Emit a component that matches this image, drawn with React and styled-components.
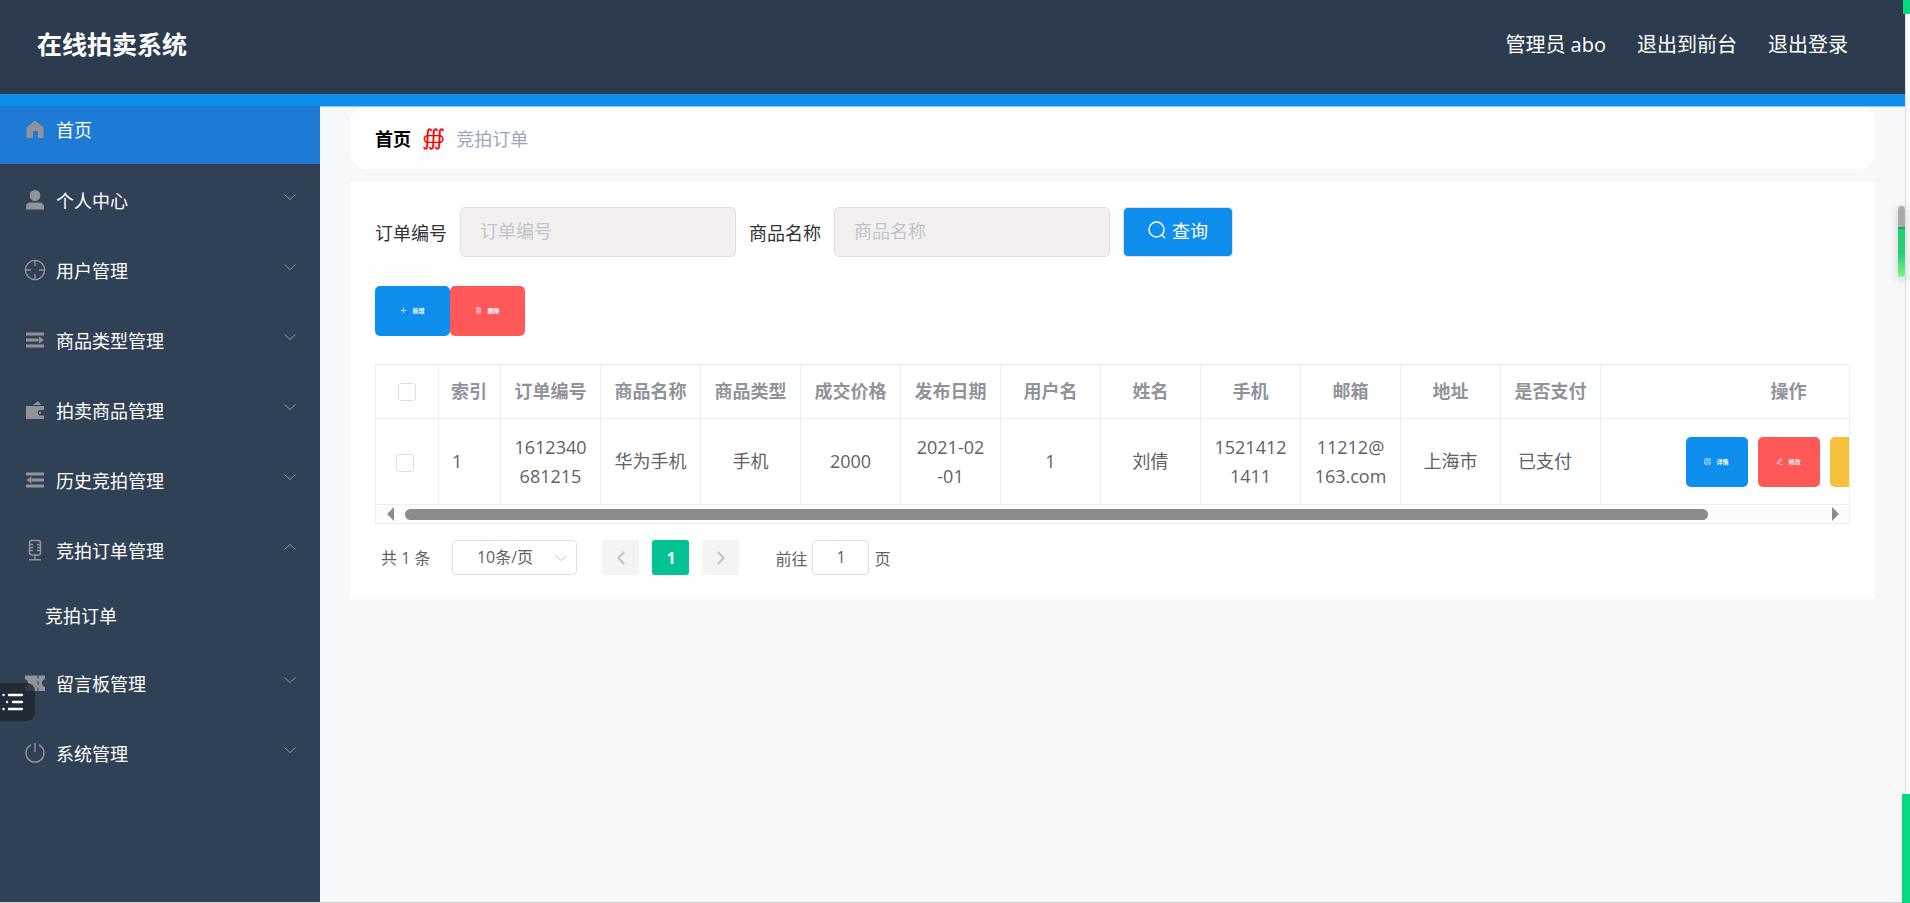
import { useState } from "react";
import styled, { createGlobalStyle, css } from "styled-components";

const menus = [
  { key: "user", label: "个人中心", icon: "person" },
  { key: "yonghu", label: "用户管理", icon: "aim" },
  { key: "leixing", label: "商品类型管理", icon: "unfold" },
  { key: "shangpin", label: "拍卖商品管理", icon: "wallet" },
  { key: "lishi", label: "历史竞拍管理", icon: "fold" },
  { key: "dingdan", label: "竞拍订单管理", icon: "mic", children: ["竞拍订单"] },
  { key: "liuyan", label: "留言板管理", icon: "ticket" },
  { key: "xitong", label: "系统管理", icon: "power" },
];

const columns = [
  "订单编号",
  "商品名称",
  "商品类型",
  "成交价格",
  "发布日期",
  "用户名",
  "姓名",
  "手机",
  "邮箱",
  "地址",
];

const orders = [
  {
    id: 1,
    cells: ["1612340681215", "华为手机", "手机", "2000", "2021-02-01", "1", "刘倩", "15214121411", "11212@163.com", "上海市"],
    paid: "已支付",
  },
];

const icons = {
  home: <path d="M11 2.5 19.5 9.5V20H14V13H9V20H2.5V9.5Z" />,
  person: (
    <>
      <ellipse cx="11" cy="6.500" rx="5.300" ry="5.500" />
      <path d="M2 20.500V18q0-4.500 4.500-4.500h9q4.500 0 4.500 4.500v2.500Z" />
    </>
  ),
  aim: (
    <g fill="none" stroke="currentColor" strokeWidth="1.4">
      <circle cx="11" cy="11" r="9.600" />
      <path d="M11 1.500V7M11 15v5.500M1.500 11H7M15 11h5.500" />
    </g>
  ),
  unfold: <path d="M2 3.500h18v3H2zM2 9.500h12.500v3H2zM15 7.500 20 11l-5 3.500zM2 15.500h18v3H2z" />,
  fold: <path d="M2 3.500h18v3H2zM8 9.500h12v3H8zM7.500 7.500 2.500 11l5 3.500zM2 15.500h18v3H2z" />,
  wallet: (
    <path
      fillRule="evenodd"
      d="M2 7h18v4h-4.500a3 3 0 0 0 0 5.500H20V20H2ZM9 6 14 2 17 6ZM15 12.800h2v2h-2z"
    />
  ),
  mic: (
    <g fill="none" stroke="currentColor" strokeWidth="1.5">
      <rect x="5.500" y="1.500" width="11" height="14.500" rx="2.500" />
      <path d="M6 5.500h3M6 8.500h3M6 11.500h3M13 5.500h3M13 8.500h3M13 11.500h3M11 16v4.500M5 20.700h12" />
    </g>
  ),
  ticket: (
    <path
      fillRule="evenodd"
      d="M1 3.500h20V7q-3 1-3 4t3 4v4H1v-4q3-1 3-4T1 7ZM13.500 3.500v3h1v-3zM13.500 9v4h1V9zM13.500 15.500V19h1v-3.500z"
    />
  ),
  power: (
    <g fill="none" stroke="currentColor" strokeWidth="1.4">
      <path d="M7 3a9 9 0 1 0 8 0M11 1v9" />
    </g>
  ),
};

const MenuIcon = ({ name }) => (
  <IconSvg viewBox="0 0 22 22" fill="currentColor" aria-hidden="true">
    {icons[name]}
  </IconSvg>
);

const TrashIcon = () => (
  <SmallIcon viewBox="0 0 8 8">
    <path d="M1 1.500h6M3 .7h2M2 1.500V7h4V1.500M3.500 3v2.500M4.500 3v2.500" />
  </SmallIcon>
);

const App = () => {
  const [opened, setOpened] = useState("dingdan");
  const [orderNo, setOrderNo] = useState("");
  const [goodsName, setGoodsName] = useState("");
  const [page, setPage] = useState("1");

  const onClickMenu = (key) => {
    setOpened(opened === key ? "" : key);
  };

  return (
    <Wrapper>
      <GlobalStyle />
      <Header>
        <Title>在线拍卖系统</Title>
        <HeaderNav>
          <span>管理员 abo</span>
          <a href="#front">退出到前台</a>
          <a href="#login">退出登录</a>
        </HeaderNav>
      </Header>

      <Body>
        <Sidebar>
          <HomeLink href="#home">
            <MenuIcon name="home" />
            首页
          </HomeLink>
          {menus.map((menu) => (
            <div key={menu.key}>
              <MenuButton type="button" onClick={() => onClickMenu(menu.key)}>
                <MenuIcon name={menu.icon} />
                <span>{menu.label}</span>
                <MenuArrow viewBox="0 0 12 8" $open={opened === menu.key} aria-hidden="true">
                  <path d="M.5 1.500 6 6.500l5.500-5" />
                </MenuArrow>
              </MenuButton>
              {opened === menu.key &&
                menu.children?.map((child) => (
                  <SubLink href="#order" key={child}>
                    {child}
                  </SubLink>
                ))}
            </div>
          ))}
        </Sidebar>

        <Main>
          <Breadcrumb>
            <strong>首页</strong>
            <Separator>∰</Separator>
            <span>竞拍订单</span>
          </Breadcrumb>

          <Card>
            <SearchForm onSubmit={(e) => e.preventDefault()}>
              <label htmlFor="orderNo">订单编号</label>
              <SearchInput id="orderNo" placeholder="订单编号" value={orderNo} onChange={(e) => setOrderNo(e.target.value)} />
              <label htmlFor="goodsName">商品名称</label>
              <SearchInput id="goodsName" placeholder="商品名称" value={goodsName} onChange={(e) => setGoodsName(e.target.value)} />
              <SearchButton type="submit">
                <svg viewBox="0 0 18 18" width="18" height="18" fill="none" stroke="currentColor" strokeWidth="1.4" aria-hidden="true">
                  <circle cx="8.500" cy="8.500" r="7.500" />
                  <path d="m14 14 3 3" />
                </svg>
                查询
              </SearchButton>
            </SearchForm>

            <Toolbar>
              <SmallButton type="button" $color="#0f8fed" $width={75}>
                <SmallIcon viewBox="0 0 8 8">
                  <path d="M4 1v6M1 4h6" />
                </SmallIcon>
                新增
              </SmallButton>
              <SmallButton type="button" $color="#ff5858" $width={75}>
                <TrashIcon />
                删除
              </SmallButton>
            </Toolbar>

            <TableBox>
              <TableView>
                <Table>
                  <colgroup>
                    <Col $width={63} />
                    <Col $width={62} />
                    {columns.map((name) => (
                      <Col $width={100} key={name} />
                    ))}
                    <Col $width={100} />
                    <Col $width={376} />
                  </colgroup>
                  <thead>
                    <tr>
                      <Th>
                        <Checkbox aria-label="全选" />
                      </Th>
                      <Th $align="left">索引</Th>
                      {columns.map((name) => (
                        <Th key={name}>{name}</Th>
                      ))}
                      <Th>是否支付</Th>
                      <Th>操作</Th>
                    </tr>
                  </thead>
                  <tbody>
                    {orders.map((order) => (
                      <tr key={order.id}>
                        <Td $tail={18}>
                          <Checkbox aria-label="选择" />
                        </Td>
                        <Td $align="left">{order.id}</Td>
                        {order.cells.map((cell, i) => (
                          <Td key={columns[i]}>{cell}</Td>
                        ))}
                        <Td $tail={24}>{order.paid}</Td>
                        <Td>
                          <Actions>
                            <SmallButton type="button" $color="#0f8fed" $width={62}>
                              <SmallIcon viewBox="0 0 8 8">
                                <path d="M1 1h6v6H1zM2.500 3h3M2.500 5h3" />
                              </SmallIcon>
                              详情
                            </SmallButton>
                            <SmallButton type="button" $color="#ff5858" $width={62}>
                              <SmallIcon viewBox="0 0 8 8">
                                <path d="M1.500 5.500 5 1l1.500 1L3 6.500H1.500zM4 7.300h3.500" />
                              </SmallIcon>
                              修改
                            </SmallButton>
                            <SmallButton type="button" $color="#f4c13d" $width={62}>
                              <TrashIcon />
                              删除
                            </SmallButton>
                          </Actions>
                        </Td>
                      </tr>
                    ))}
                  </tbody>
                </Table>
              </TableView>
              <ScrollTrack>
                <ScrollArrow viewBox="0 0 7 14">
                  <path d="M7 0v14L0 7z" />
                </ScrollArrow>
                <ScrollRail>
                  <ScrollThumb />
                </ScrollRail>
                <ScrollArrow viewBox="0 0 7 14">
                  <path d="M0 0v14l7-7z" />
                </ScrollArrow>
              </ScrollTrack>
            </TableBox>

            <Pagination>
              <span>共 1 条</span>
              <SizeBox>
                <SizeSelect aria-label="每页条数" defaultValue="10">
                  <option value="10">10条/页</option>
                  <option value="20">20条/页</option>
                  <option value="50">50条/页</option>
                </SizeSelect>
                <SizeArrow viewBox="0 0 12 8" aria-hidden="true">
                  <path d="M.5 1.500 6 6.500l5.500-5" />
                </SizeArrow>
              </SizeBox>
              <Pager>
                <PageButton type="button" aria-label="上一页" disabled>
                  <svg viewBox="0 0 8 14" width="8" height="14">
                    <path d="M7 1 1.500 7 7 13" />
                  </svg>
                </PageButton>
                <PageButton type="button" $active>
                  1
                </PageButton>
                <PageButton type="button" aria-label="下一页" disabled>
                  <svg viewBox="0 0 8 14" width="8" height="14">
                    <path d="m1 1 5.500 6L1 13" />
                  </svg>
                </PageButton>
              </Pager>
              <Jump>
                前往
                <JumpInput value={page} onChange={(e) => setPage(e.target.value)} />
                页
              </Jump>
            </Pagination>
          </Card>
        </Main>
      </Body>

      <FloatTab type="button" aria-label="目录">
        <svg viewBox="0 0 22 20" width="22" height="20" stroke="currentColor" strokeWidth="2.400" strokeLinecap="round">
          <path d="M2.500 3h.1M8 3h13M6 10h.1M12 10h9M2.500 17h.1M8 17h13" />
        </svg>
      </FloatTab>
      <EdgeStrip />
      <EdgeBlock $top />
      <EdgeBlock />
      <EdgeHandle />
    </Wrapper>
  );
};

export default App;

const GlobalStyle = createGlobalStyle`
  * {
    box-sizing: border-box;
  }

  body {
    margin: 0;
    background: #f7f8fa;
    font-family: "Open Sans", "Noto Sans CJK SC", sans-serif;
    font-size: 18px;
    color: #303133;
  }

  button, input, select {
    font-family: inherit;
  }

  a {
    color: inherit;
    text-decoration: none;
  }
`;

const Wrapper = styled.div`
  display: flex;
  flex-direction: column;
  min-height: 100vh;
  padding-right: 5px;
  border-bottom: 1px solid #cfd1d4;
`;

const Header = styled.header`
  display: flex;
  justify-content: space-between;
  align-items: center;
  height: 106px;
  padding: 0 57px 4px 37px;
  background: #2c3c4e;
  border-bottom: 12px solid #0f8fed;
  color: #fff;
`;

const Title = styled.h1`
  margin: 0;
  padding-bottom: 2px;
  font-size: 25px;
  line-height: 40px;
`;

const HeaderNav = styled.nav`
  display: flex;
  gap: 31px;
  font-size: 20px;
  line-height: 40px;
`;

const Body = styled.div`
  display: flex;
  flex: 1;
`;

const Sidebar = styled.aside`
  flex: none;
  width: 320px;
  background: #304156;
  color: #fff;
`;

const IconSvg = styled.svg`
  flex: none;
  width: 22px;
  height: 22px;
  margin-right: 10px;
  color: #909399;
`;

const itemStyle = css`
  display: flex;
  align-items: center;
  width: 100%;
  padding: 0 24px;
  font-size: 18px;
  color: #fff;
`;

const HomeLink = styled.a`
  ${itemStyle}
  height: 58px;
  padding-bottom: 12px;
  margin-bottom: 1px;
  background: #1e7ad4;
`;

const MenuButton = styled.button`
  ${itemStyle}
  height: 70px;
  border: 0;
  background: none;
  text-align: left;
  cursor: pointer;

  span {
    flex: 1;
  }
`;

const MenuArrow = styled.svg`
  width: 12px;
  height: 8px;
  margin-bottom: 6px;
  fill: none;
  stroke: #909399;
  transform: ${({ $open }) => ($open ? "rotate(180deg)" : "none")};
`;

const SubLink = styled.a`
  display: flex;
  align-items: center;
  height: 63px;
  padding: 0 20px 4px 45px;
`;

const Main = styled.main`
  flex: 1;
  min-width: 0;
  padding: 0 30px;
  border-top: 1px solid #87c6f6;
`;

const Breadcrumb = styled.div`
  display: flex;
  align-items: center;
  gap: 11px;
  height: 62px;
  padding: 0 25px;
  margin-bottom: 13px;
  border-radius: 16px;
  background: #fff;
  color: #97a8be;

  strong {
    color: #000;
  }
`;

const Separator = styled.span`
  color: #f00;
  font-family: "DejaVu Serif", "DejaVu Sans", serif;
  font-size: 22px;
  font-style: italic;
  line-height: 24px;
`;

const Card = styled.section`
  padding: 25px 25px 24px;
  background: #fff;
`;

const SearchForm = styled.form`
  display: flex;
  align-items: center;
  gap: 13px;
`;

const SearchInput = styled.input`
  width: 276px;
  height: 50px;
  padding: 0 19px 2px;
  border: 1px solid #dcdfe6;
  border-radius: 5px;
  background: #f4f0ef;
  font-size: 18px;
  color: #606266;
  outline: none;

  &::placeholder {
    color: #c0c4cc;
  }
`;

const SearchButton = styled.button`
  display: flex;
  align-items: center;
  justify-content: center;
  gap: 6px;
  width: 110px;
  height: 50px;
  padding: 0 0 5px;
  border: 1px solid #dcdfe6;
  border-radius: 5px;
  background: #0f8fed;
  font-size: 18px;
  color: #fff;
  cursor: pointer;
`;

const Toolbar = styled.div`
  display: flex;
  margin: 29px 0 28px;
`;

const SmallButton = styled.button`
  display: flex;
  align-items: center;
  justify-content: center;
  gap: 5px;
  width: ${({ $width }) => $width}px;
  height: 50px;
  padding: 0 0 1px;
  border: 0;
  border-radius: 5px;
  background: ${({ $color }) => $color};
  font-size: 6px;
  font-weight: 700;
  color: #fff;
  cursor: pointer;
`;

const SmallIcon = styled.svg`
  width: 7px;
  height: 7px;
  fill: none;
  stroke: currentColor;
  stroke-width: 0.8;
`;

const TableBox = styled.div`
  border: 1px solid #ebeef5;
`;

const TableView = styled.div`
  overflow-x: auto;
  scrollbar-width: none;
`;

const Table = styled.table`
  table-layout: fixed;
  width: 1601px;
  border-collapse: separate;
  border-spacing: 0;
`;

const Col = styled.col`
  width: ${({ $width }) => $width}px;
`;

const Th = styled.th`
  height: 54px;
  padding: 0 0 3px ${({ $align }) => ($align ? 12 : 0)}px;
  border-right: 1px solid #ebeef5;
  border-bottom: 1px solid #ebeef5;
  text-align: ${({ $align }) => $align || "center"};
  color: #909399;
  white-space: nowrap;
`;

const Td = styled.td`
  height: 86px;
  padding: 0 ${({ $tail }) => $tail || 13}px 0 13px;
  border-right: 1px solid #ebeef5;
  border-bottom: 1px solid #ebeef5;
  text-align: ${({ $align }) => $align || "center"};
  line-height: 29px;
  color: #606266;
  word-break: break-all;
  line-break: anywhere;
`;

const Checkbox = styled.input.attrs({ type: "checkbox" })`
  appearance: none;
  display: inline-block;
  width: 18px;
  height: 18px;
  margin: 0;
  border: 1px solid #dcdfe6;
  border-radius: 3px;
  background: #fff;
  vertical-align: middle;

  &:checked {
    background: #0f8fed;
  }
`;

const Actions = styled.div`
  display: flex;
  justify-content: center;
  gap: 10px;
`;

const ScrollTrack = styled.div`
  display: flex;
  align-items: center;
  gap: 11px;
  height: 18px;
  padding: 0 10px 0 11px;
  background: #fcfcfc;
`;

const ScrollArrow = styled.svg`
  flex: none;
  width: 7px;
  height: 14px;
  fill: #8b8b8b;
`;

const ScrollRail = styled.div`
  flex: 1;
`;

const ScrollThumb = styled.div`
  width: 92%;
  height: 11px;
  border-radius: 6px;
  background: #8b8b8b;
`;

const Pagination = styled.div`
  display: flex;
  align-items: center;
  padding: 16px 6px 0;
  font-size: 16px;
  color: #606266;

  span {
    padding-bottom: 2px;
  }
`;

const SizeBox = styled.div`
  display: grid;
  align-items: center;
  width: 125px;
  margin: 0 25px 0 22px;
`;

const SizeSelect = styled.select`
  grid-area: 1 / 1;
  appearance: none;
  height: 35px;
  padding: 0 40px 2px 20px;
  border: 1px solid #dcdfe6;
  border-radius: 4px;
  background: #fff;
  font-size: 16px;
  text-align: center;
  color: #606266;
`;

const SizeArrow = styled.svg`
  grid-area: 1 / 1;
  justify-self: end;
  width: 12px;
  height: 8px;
  margin-right: 10px;
  fill: none;
  stroke: #c0c4cc;
  pointer-events: none;
`;

const Pager = styled.div`
  display: flex;
  gap: 13px;
`;

const PageButton = styled.button`
  display: flex;
  align-items: center;
  justify-content: center;
  width: 37px;
  height: 35px;
  padding: 0;
  border: 0;
  border-radius: 3px;
  background: ${({ $active }) => ($active ? "#00c292" : "#f4f4f5")};
  font-size: 16px;
  font-weight: 700;
  color: #fff;

  svg {
    fill: none;
    stroke: #c0c4cc;
    stroke-width: 2;
  }
`;

const Jump = styled.label`
  display: flex;
  align-items: center;
  gap: 5px;
  margin-left: 36px;
`;

const JumpInput = styled.input`
  width: 57px;
  height: 35px;
  padding: 0 0 2px;
  border: 1px solid #dcdfe6;
  border-radius: 4px;
  font-size: 16px;
  text-align: center;
  color: #606266;
`;

const FloatTab = styled.button`
  position: fixed;
  top: 683px;
  left: 0;
  display: flex;
  align-items: center;
  width: 35px;
  height: 38px;
  padding: 0 0 0 1px;
  border: 0;
  border-radius: 0 8px 8px 0;
  background: rgba(29, 37, 46, 0.8);
  color: #fff;
`;

const EdgeStrip = styled.div`
  position: fixed;
  top: 0;
  right: 0;
  bottom: 0;
  width: 5px;
  border-left: 1px solid #dcdde0;
  background: #fafafa;
`;

const EdgeBlock = styled.div`
  position: fixed;
  right: 0;
  width: ${({ $top }) => ($top ? 7 : 8)}px;
  background: #06d880;
  ${({ $top }) =>
    $top
      ? css`
          top: 0;
          height: 14px;
        `
      : css`
          bottom: 0;
          height: 109px;
        `}
`;

const EdgeHandle = styled.div`
  position: fixed;
  top: 205px;
  right: 4px;
  width: 9px;
  height: 73px;
  border: 1px solid #e4e4e4;
  border-radius: 5px;
  background: linear-gradient(#a9aaab 0 21px, #1fa85a 21px 23px, #24cf72 23px 48px, #7df783);
  box-shadow: 0 3px 8px rgba(0, 0, 0, 0.15);
`;
